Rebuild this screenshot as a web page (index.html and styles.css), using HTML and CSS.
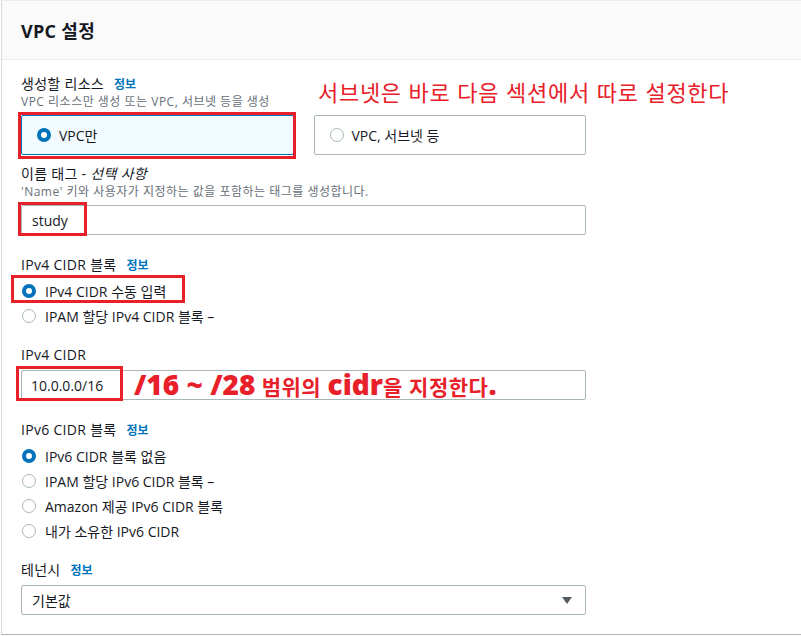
FILE: index.html
```html
<!DOCTYPE html>
<html lang="ko">
<head>
  <meta charset="UTF-8">
  <title>VPC 설정</title>
  <link rel="stylesheet" href="styles.css">
</head>
<body>

  <div class="panel">
    <div class="panel-header">
      <h2>VPC 설정</h2>
    </div>

    <div class="panel-body">

      <!-- 생성할 리소스 -->
      <div class="field field-tight">
        <div class="label">생성할 리소스 <a class="info">정보</a></div>
        <div class="desc">VPC 리소스만 생성 또는 VPC, 서브넷 등을 생성</div>
        <div class="tiles">
          <div class="tile selected">
            <span class="radio checked"></span>
            <span>VPC만</span>
            <span class="mark mark-tile"></span>
          </div>
          <div class="tile">
            <span class="radio"></span>
            <span>VPC, 서브넷 등</span>
          </div>
        </div>
        <div class="note note-subnet">서브넷은 바로 다음 섹션에서 따로 설정한다</div>
      </div>

      <!-- 이름 태그 -->
      <div class="field">
        <div class="label">이름 태그 - <i>선택 사항</i></div>
        <div class="desc">'Name' 키와 사용자가 지정하는 값을 포함하는 태그를 생성합니다.</div>
        <div class="control">
          <input class="input" type="text" value="study">
          <span class="mark mark-name"></span>
        </div>
      </div>

      <!-- IPv4 CIDR 블록 -->
      <div class="field field-list">
        <div class="label">IPv4 CIDR 블록 <a class="info">정보</a></div>
        <div class="radio-group">
          <div class="radio-row">
            <span class="radio checked"></span>
            <span>IPv4 CIDR 수동 입력</span>
            <span class="mark mark-ipv4"></span>
          </div>
          <div class="radio-row">
            <span class="radio"></span>
            <span>IPAM 할당 IPv4 CIDR 블록 –</span>
          </div>
        </div>
      </div>

      <!-- IPv4 CIDR -->
      <div class="field">
        <div class="label">IPv4 CIDR</div>
        <div class="control">
          <input class="input input-cidr" type="text" value="10.0.0.0/16">
          <span class="mark mark-cidr"></span>
          <div class="note note-cidr"><b class="big">/16 ~ /28</b> 범위의 <b class="big">cidr</b>을 지정한다<b class="big">.</b></div>
        </div>
      </div>

      <!-- IPv6 CIDR 블록 -->
      <div class="field field-list">
        <div class="label">IPv6 CIDR 블록 <a class="info">정보</a></div>
        <div class="radio-group">
          <div class="radio-row">
            <span class="radio checked"></span>
            <span>IPv6 CIDR 블록 없음</span>
          </div>
          <div class="radio-row">
            <span class="radio"></span>
            <span>IPAM 할당 IPv6 CIDR 블록 –</span>
          </div>
          <div class="radio-row">
            <span class="radio"></span>
            <span>Amazon 제공 IPv6 CIDR 블록</span>
          </div>
          <div class="radio-row">
            <span class="radio"></span>
            <span>내가 소유한 IPv6 CIDR</span>
          </div>
        </div>
      </div>

      <!-- 테넌시 -->
      <div class="field field-last">
        <div class="label">테넌시 <a class="info">정보</a></div>
        <div class="select">
          <span>기본값</span>
          <svg class="caret" width="10" height="7" viewBox="0 0 10 7"><path d="M0 0h10L5 7z" fill="#545b64"/></svg>
        </div>
      </div>

    </div>
  </div>

</body>
</html>
```

FILE: styles.css
```css
body {
  margin: 0;
  background: #fff;
  overflow: hidden;
  font-family: "Open Sans", "Noto Sans CJK KR", sans-serif;
  color: #16191f;
}

.panel {
  margin-left: 1px;
  width: 830px;
  border-left: 1px solid #d5dbdb;
  border-top: 1px solid #eaeded;
  border-bottom: 1px solid #aab7b8;
}

.panel-header {
  height: 58px;
  padding-left: 19px;
  background: #fafafa;
  border-bottom: 1px solid #eaeded;
  display: flex;
  align-items: center;
}

.panel-header h2 {
  margin: 0;
  font-size: 18px;
  font-weight: 700;
  letter-spacing: 0.3px;
}

.panel-body {
  width: 565px;
  padding: 14px 0 19px 19px;
}

.field {
  position: relative;
  margin-bottom: 20px;
}

.field-tight { margin-bottom: 9px; }
.field-list { margin-bottom: 17px; }
.field-last { margin-bottom: 0; }

.label {
  height: 20px;
  font-size: 14px;
  line-height: 20px;
  letter-spacing: 0.3px;
}

.label i {
  font-style: italic;
}

.info {
  margin-left: 6px;
  font-size: 12px;
  line-height: 1;
  font-weight: 700;
  color: #0073bb;
  letter-spacing: 0;
}

.desc {
  font-size: 12px;
  line-height: 16px;
  color: #687078;
  letter-spacing: 0.5px;
}

/* tiles */
.tiles {
  margin-top: 5px;
  display: grid;
  grid-template-columns: 1fr 1fr;
  gap: 20px;
}

.tile {
  position: relative;
  height: 40px;
  box-sizing: border-box;
  padding-left: 15px;
  border: 1px solid #aab7b8;
  border-radius: 2px;
  display: flex;
  align-items: center;
  gap: 8px;
  font-size: 14px;
}

.tile.selected {
  background: #f1faff;
  border-color: #0073bb;
}

/* radios */
.radio {
  flex: none;
  width: 14px;
  height: 14px;
  box-sizing: border-box;
  border-radius: 50%;
  border: 1.5px solid #aab7b8;
  background: #fff;
}

.radio.checked {
  border: 4.5px solid #0073bb;
}

.radio-group {
  margin-top: 3px;
}

.radio-row {
  position: relative;
  height: 25px;
  padding-left: 1px;
  display: flex;
  align-items: center;
  gap: 9px;
  font-size: 14px;
}

/* inputs */
.control {
  position: relative;
  margin-top: 5px;
}

.input {
  display: block;
  width: 100%;
  height: 30px;
  box-sizing: border-box;
  margin: 0;
  padding: 0 10px;
  border: 1px solid #aab7b8;
  border-radius: 2px;
  font-family: inherit;
  font-size: 14px;
  color: #16191f;
  background: #fff;
}

.input-cidr {
  padding-left: 9px;
}

.select {
  margin-top: 5px;
  height: 30px;
  box-sizing: border-box;
  padding: 0 13px 0 10px;
  border: 1px solid #aab7b8;
  border-radius: 2px;
  display: flex;
  align-items: center;
  justify-content: space-between;
  font-size: 14px;
}

/* red annotations drawn over the form */
.mark {
  position: absolute;
  border: 3px solid #e8202a;
  box-sizing: border-box;
  pointer-events: none;
}

.mark-tile { left: -4px; top: -4px; width: 278px; height: 47px; }
.mark-name { left: -3px; top: -3px; width: 69px; height: 34px; }
.mark-ipv4 { left: -10px; top: -3px; width: 174px; height: 28px; }
.mark-cidr { left: -5px; top: -4px; width: 107px; height: 35px; }

.note {
  position: absolute;
  color: #e8202a;
  font-family: "Noto Sans CJK KR", sans-serif;
  white-space: nowrap;
}

.note-subnet {
  left: 297px;
  top: 3px;
  font-size: 22px;
  line-height: 28px;
  letter-spacing: 0.7px;
}

.note-cidr {
  left: 113px;
  top: -2px;
  font-size: 21px;
  line-height: 32px;
  font-weight: 700;
  letter-spacing: 0.5px;
}

.note-cidr .big {
  font-family: "Open Sans", sans-serif;
  font-size: 28px;
  letter-spacing: 0;
}
```
